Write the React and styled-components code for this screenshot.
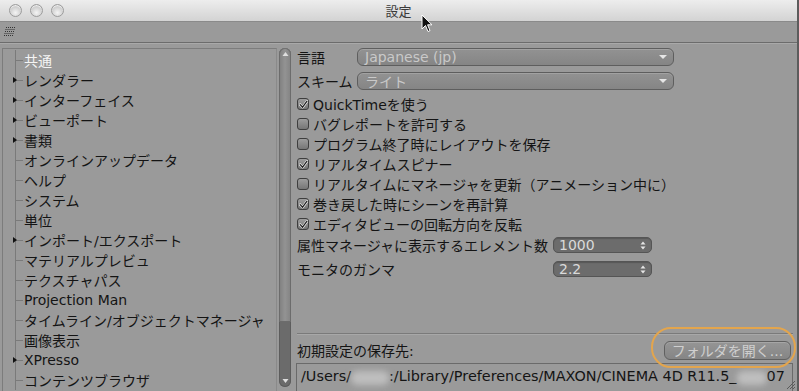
import React from "react";
import styled, { createGlobalStyle } from "styled-components";

const GlobalStyle = createGlobalStyle`
    html, body {
        margin: 0;
        padding: 0;
        background: #9a9a9a;
    }
`;

const FONT = `"DejaVu Sans", "Noto Sans CJK JP", sans-serif`;

const Window = styled.div`
    position: relative;
    width: 799px;
    height: 391px;
    display: flex;
    flex-direction: column;
    overflow: hidden;
    background: #9a9a9a;
    font-family: ${FONT};
    box-sizing: border-box;
    border-right: 2px solid #5c5c5c;
`;

const TitleBar = styled.div`
    height: 22px;
    flex: none;
    display: grid;
    grid-template-columns: 1fr auto 1fr;
    align-items: center;
    background: linear-gradient(#ededed, #d3d3d3);
    border-bottom: 1px solid #8a8a8a;
    box-sizing: border-box;
`;

const Lights = styled.div`
    display: flex;
    gap: 8px;
    padding-left: 9px;
`;

const Light = styled.span`
    width: 13px;
    height: 13px;
    border-radius: 50%;
    box-sizing: border-box;
    border: 1px solid #9c9c9c;
    background: radial-gradient(circle at 50% 70%, #f4f4f4 0%, #d8d8d8 45%, #b4b4b4 100%);
    box-shadow: inset 0 1px 1px rgba(255,255,255,0.8);
`;

const Title = styled.div`
    font-size: 13px;
    color: #3a3a3a;
    font-family: "Noto Sans CJK JP", sans-serif;
`;

const Toolbar = styled.div`
    height: 20px;
    flex: none;
    display: flex;
    align-items: center;
    padding-left: 4px;
    border-bottom: 1px solid #6c6c6c;
    box-shadow: 0 1px 0 #a9a9a9;
`;

const Body = styled.div`
    flex: 1;
    display: flex;
    padding: 5px 0 0 2px;
    min-height: 0;
`;

const TreeBox = styled.div`
    width: 275px;
    flex: none;
    box-sizing: border-box;
    border-top: 1px solid #7c7c7c;
    border-left: 1px solid #7c7c7c;
    border-right: 1px solid #8a8a8a;
    padding-top: 1px;
`;

const TreeRow = styled.div`
    position: relative;
    height: 20px;
    display: flex;
    align-items: center;
    padding-left: 21px;
    font-size: 14px;
    color: ${({$active}) => $active ? "#f4f4f4" : "#141414"};
    white-space: nowrap;

    &::before {
        content: "";
        position: absolute;
        left: 12px;
        top: 0;
        bottom: 0;
        width: 1px;
        background: #7a7a7a;
    }
    &::after {
        content: "";
        position: absolute;
        left: 12px;
        top: 10px;
        width: 8px;
        height: 1px;
        background: #7a7a7a;
    }
`;

const Expander = styled.span`
    position: absolute;
    left: 10px;
    top: 7px;
    width: 0;
    height: 0;
    border-top: 3px solid transparent;
    border-bottom: 3px solid transparent;
    border-left: 4px solid #111;
    z-index: 1;
`;

const Scrollbar = styled.div`
    width: 12px;
    flex: none;
    margin-left: 2px;
    margin-bottom: 4px;
    display: flex;
    flex-direction: column;
    border-radius: 6px;
    overflow: hidden;
    background: #6b6b6b;
    box-shadow: inset 0 0 0 1px #5d5d5d;
    position: relative;
`;

const ScrollThumb = styled.div`
    height: 274px;
    border-radius: 6px 6px 0 0;
    background: linear-gradient(90deg, #7e7e7e, #939393 50%, #828282);
    box-shadow: inset 0 0 0 1px #6c6c6c;
    display: flex;
    justify-content: center;
    padding-top: 3px;
    box-sizing: border-box;
`;

const ScrollEnd = styled.div`
    margin-top: auto;
    display: flex;
    justify-content: center;
    padding-bottom: 3px;
`;

const Right = styled.div`
    flex: 1;
    display: flex;
    flex-direction: column;
    padding-left: 6px;
    padding-right: 4px;
    min-width: 0;
`;

const FieldRow = styled.div`
    height: 18px;
    display: flex;
    align-items: center;
    margin-top: ${({$mt}) => $mt}px;
    font-size: 14px;
    color: #141414;
`;

const Label = styled.span`
    width: ${({$w}) => $w}px;
    flex: none;
    white-space: nowrap;
`;

const Dropdown = styled.div`
    width: 317px;
    height: 18px;
    box-sizing: border-box;
    border: 1px solid #5e5e5e;
    border-radius: 6px;
    background: linear-gradient(#929292, #858585);
    box-shadow: inset 0 1px 0 #a2a2a2;
    display: flex;
    align-items: center;
    padding: 0 6px 0 7px;
    color: #c9c9c9;
    font-size: 14px;
`;

const DownArrow = styled.span`
    margin-left: auto;
    width: 0;
    height: 0;
    border-left: 4px solid transparent;
    border-right: 4px solid transparent;
    border-top: 4px solid #e6e6e6;
`;

const CheckRow = styled.div`
    height: 20px;
    display: flex;
    align-items: center;
    gap: 4px;
    font-size: 14px;
    color: #141414;
    white-space: nowrap;
    margin-top: ${({$mt}) => $mt || 0}px;
`;

const Box = styled.span`
    width: 12px;
    height: 12px;
    flex: none;
    box-sizing: border-box;
    border: 1px solid #3e3e3e;
    border-radius: 3px;
    background: linear-gradient(#9c9c9c, #767676);
    display: flex;
    align-items: center;
    justify-content: center;
`;

const SpinRow = styled.div`
    height: 16px;
    display: flex;
    align-items: center;
    margin-top: ${({$mt}) => $mt}px;
    font-size: 14px;
    color: #141414;
`;

const SpinField = styled.div`
    width: 99px;
    height: 16px;
    box-sizing: border-box;
    border: 1px solid #555;
    border-radius: 5px;
    background: #6c6c6c;
    box-shadow: inset 0 1px 1px #585858;
    display: flex;
    align-items: center;
    padding: 0 5px;
    color: #dadada;
    font-size: 14px;
`;

const Separator = styled.div`
    height: 1px;
    background: #7a7a7a;
    box-shadow: 0 1px 0 #a8a8a8;
    margin-top: 56px;
`;

const SaveRow = styled.div`
    display: flex;
    align-items: center;
    justify-content: space-between;
    margin-top: 6px;
    font-size: 14px;
    color: #141414;
`;

const Button = styled.div`
    width: 127px;
    height: 19px;
    box-sizing: border-box;
    border: 1px solid #606060;
    border-radius: 6px;
    background: linear-gradient(#959595, #858585);
    box-shadow: inset 0 1px 0 #a6a6a6;
    color: #cfcfcf;
    font-size: 14px;
    display: flex;
    align-items: center;
    justify-content: center;
    margin-right: 2px;
`;

const PathField = styled.div`
    margin-top: 3px;
    margin-left: -1px;
    height: 28px;
    box-sizing: border-box;
    border: 1px solid #6a6a6a;
    border-bottom: none;
    padding: 4px 0 0 4px;
    font-size: 14.4px;
    color: #141414;
    white-space: nowrap;
    overflow: hidden;
    display: flex;
    align-items: flex-start;
`;

const Smudge = styled.span`
    display: inline-block;
    flex: none;
    width: ${({$w}) => $w}px;
    height: 14px;
    margin-top: 3px;
    border-radius: 6px;
    background: rgba(220, 220, 220, 0.55);
    filter: blur(3px);
`;

const Highlight = styled.div`
    position: absolute;
    left: 651px;
    top: 327px;
    width: 145px;
    height: 41px;
    box-sizing: border-box;
    border: 2px solid #e3a54d;
    border-radius: 20px;
    pointer-events: none;
`;

const Cursor = styled.svg`
    position: absolute;
    left: 421px;
    top: 14px;
`;

const Grip = styled.svg`
    position: absolute;
    right: 1px;
    bottom: 1px;
`;

const Check = () => (
    <svg width="9" height="9" viewBox="0 0 9 9">
        <path d="M1.2 4.6 L3.6 7.2 L8 1.2" fill="none" stroke="#fafafa" strokeWidth="2.4" strokeLinecap="round" strokeLinejoin="round"/>
        <path d="M1.2 4.6 L3.6 7.2 L8 1.2" fill="none" stroke="#222" strokeWidth="1.3" strokeLinecap="round" strokeLinejoin="round"/>
    </svg>
);

const SpinArrows = () => (
    <svg width="6" height="9" viewBox="0 0 6 9" style={{marginLeft: "auto"}}>
        <path d="M0.5 3.5 L3 0.5 L5.5 3.5Z M0.5 5.5 L3 8.5 L5.5 5.5Z" fill="#e6e6e6"/>
    </svg>
);

const ScrollArrow = ({down}) => (
    <svg width="7" height="6" viewBox="0 0 7 6">
        <path d={down ? "M0.5 1 L6.5 1 L3.5 5Z" : "M0.5 5 L6.5 5 L3.5 1Z"} fill="#dedede"/>
    </svg>
);

const GripIcon = () => (
    <svg width="11" height="10" viewBox="0 0 11 10">
        {[0, 1, 2, 3, 4].map(r =>
            [0, 1, 2, 3, 4].map(c => (
                <rect key={r + "-" + c} x={c * 2 + (4 - r) * 0.5} y={r * 2} width="1" height="1" fill="#333"/>
            ))
        )}
    </svg>
);

const tree = [
    {label: "共通", active: true},
    {label: "レンダラー", exp: true},
    {label: "インターフェイス", exp: true},
    {label: "ビューポート", exp: true},
    {label: "書類", exp: true},
    {label: "オンラインアップデータ"},
    {label: "ヘルプ"},
    {label: "システム"},
    {label: "単位"},
    {label: "インポート/エクスポート", exp: true},
    {label: "マテリアルプレビュ"},
    {label: "テクスチャパス"},
    {label: "Projection Man"},
    {label: "タイムライン/オブジェクトマネージャ"},
    {label: "画像表示"},
    {label: "XPresso", exp: true},
    {label: "コンテンツブラウザ"},
];

const checks = [
    {label: "QuickTimeを使う", on: true},
    {label: "バグレポートを許可する"},
    {label: "プログラム終了時にレイアウトを保存"},
    {label: "リアルタイムスピナー", on: true},
    {label: "リアルタイムにマネージャを更新（アニメーション中に）"},
    {label: "巻き戻した時にシーンを再計算", on: true},
    {label: "エディタビューの回転方向を反転", on: true},
];

export default function App() {
    return (
        <>
            <GlobalStyle/>
            <Window>
                <TitleBar>
                    <Lights>
                        <Light/>
                        <Light/>
                        <Light/>
                    </Lights>
                    <Title>設定</Title>
                    <div/>
                </TitleBar>
                <Toolbar>
                    <GripIcon/>
                </Toolbar>
                <Body>
                    <TreeBox>
                        {tree.map(item => (
                            <TreeRow key={item.label} $active={item.active}>
                                {item.exp && <Expander/>}
                                {item.label}
                            </TreeRow>
                        ))}
                    </TreeBox>
                    <Scrollbar>
                        <ScrollThumb>
                            <ScrollArrow/>
                        </ScrollThumb>
                        <ScrollEnd>
                            <ScrollArrow down/>
                        </ScrollEnd>
                    </Scrollbar>
                    <Right>
                        <FieldRow $mt={0}>
                            <Label $w={60}>言語</Label>
                            <Dropdown>Japanese (jp)<DownArrow/></Dropdown>
                        </FieldRow>
                        <FieldRow $mt={6}>
                            <Label $w={60}>スキーム</Label>
                            <Dropdown>ライト<DownArrow/></Dropdown>
                        </FieldRow>
                        {checks.map((c, i) => (
                            <CheckRow key={c.label} $mt={i === 0 ? 4 : 0}>
                                <Box>{c.on && <Check/>}</Box>
                                {c.label}
                            </CheckRow>
                        ))}
                        <SpinRow $mt={3}>
                            <Label $w={256}>属性マネージャに表示するエレメント数</Label>
                            <SpinField>1000<SpinArrows/></SpinField>
                        </SpinRow>
                        <SpinRow $mt={8}>
                            <Label $w={256}>モニタのガンマ</Label>
                            <SpinField>2.2<SpinArrows/></SpinField>
                        </SpinRow>
                        <Separator/>
                        <SaveRow>
                            <span>初期設定の保存先:</span>
                            <Button>フォルダを開く...</Button>
                        </SaveRow>
                        <PathField>
                            <span>/Users/</span>
                            <Smudge $w={38}/>
                            <span>:/Library/Preferences/MAXON/CINEMA 4D R11.5_</span>
                            <Smudge $w={30}/>
                            <span>07</span>
                        </PathField>
                    </Right>
                </Body>
                <Highlight/>
                <Cursor width="12" height="19" viewBox="0 0 12 19">
                    <path d="M1 1 L1 15 L4.5 11.5 L7 17.5 L9 16.6 L6.6 10.8 L11 10.8 Z" fill="#111" stroke="#fff" strokeWidth="1"/>
                </Cursor>
                <Grip width="12" height="12" viewBox="0 0 12 12">
                    <path d="M11 3 L3 11 M11 6 L6 11 M11 9 L9 11" stroke="#5a5a5a" strokeWidth="1"/>
                </Grip>
            </Window>
        </>
    );
}
